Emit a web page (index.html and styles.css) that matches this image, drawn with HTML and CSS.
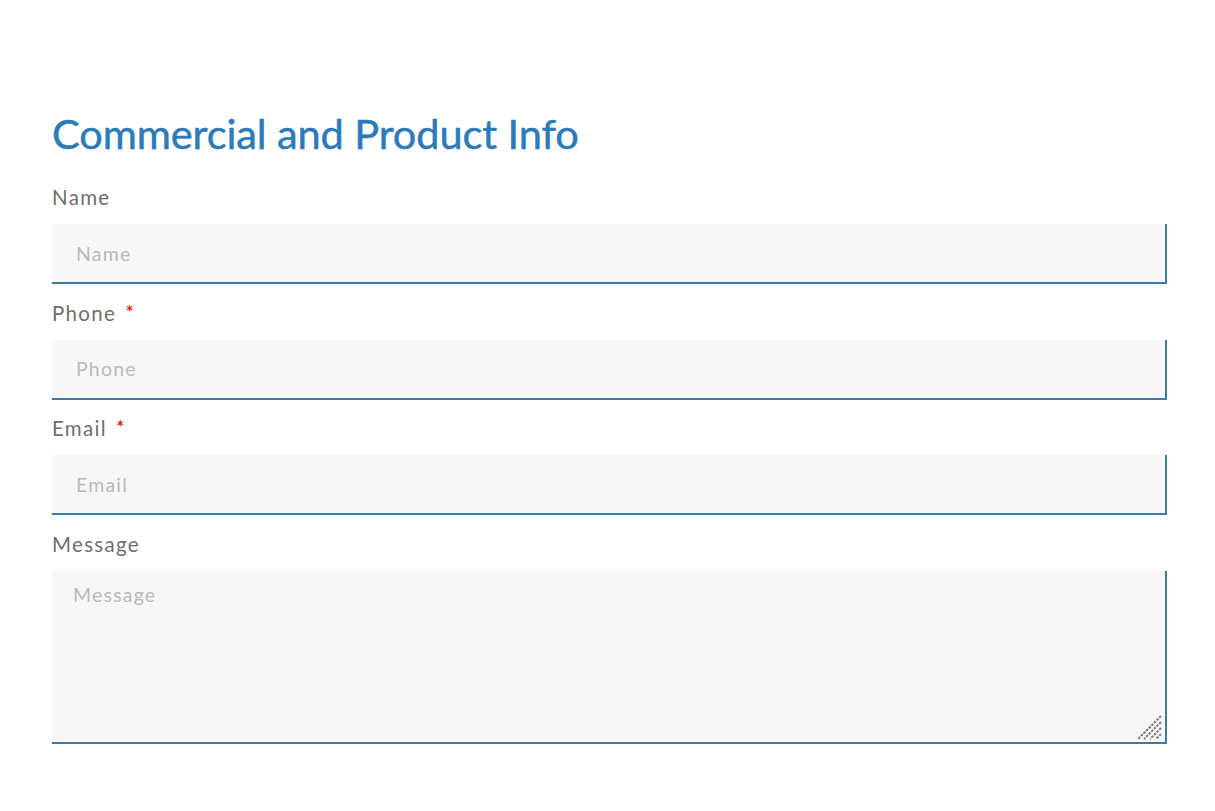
FILE: index.html
```html
<!DOCTYPE html>
<html lang="en">
<head>
<meta charset="utf-8">
<title>Commercial and Product Info</title>
<link rel="stylesheet" href="styles.css">
</head>
<body>
<main class="page">
  <form class="form">
    <h2 class="title">Commercial and Product Info</h2>
    <div class="field">
      <label class="label" for="name">Name</label>
      <input class="input" id="name" type="text" placeholder="Name">
    </div>
    <div class="field">
      <label class="label" for="phone">Phone <span class="req">*</span></label>
      <input class="input" id="phone" type="text" placeholder="Phone">
    </div>
    <div class="field">
      <label class="label" for="email">Email <span class="req">*</span></label>
      <input class="input" id="email" type="text" placeholder="Email">
    </div>
    <div class="field">
      <label class="label" for="message">Message</label>
      <div class="textarea-wrap">
        <textarea class="input textarea" id="message" placeholder="Message"></textarea>
        <svg class="grip" width="26" height="26" viewBox="0 0 26 26" aria-hidden="true">
          <g stroke="#7a7a7a" stroke-width="2" stroke-dasharray="2.5 1.2">
            <line x1="24" y1="1" x2="1" y2="24"/>
            <line x1="24" y1="7" x2="7" y2="24"/>
            <line x1="24" y1="13" x2="13" y2="24"/>
            <line x1="24" y1="19" x2="19" y2="24"/>
          </g>
        </svg>
      </div>
    </div>
  </form>
</main>
</body>
</html>
```

FILE: styles.css
```css
html, body {
  margin: 0;
  padding: 0;
  background: #ffffff;
}
.page {
  padding: 108px 48px 0 52px;
  font-family: "Lato", "Open Sans", sans-serif;
}
.form {
  width: 1115px;
  display: flex;
  flex-direction: column;
}
.title {
  margin: 0 0 25px 0;
  font-size: 41.5px;
  line-height: 50px;
  font-weight: 400;
  color: #2b7bbb;
  letter-spacing: -0.1px;
  -webkit-text-stroke: 0.5px #2b7bbb;
}
.field {
  display: flex;
  flex-direction: column;
}
.label {
  display: block;
  height: 24px;
  padding-top: 2px;
  font-size: 20.5px;
  line-height: 24px;
  color: #6e6e6e;
  letter-spacing: 1.3px;
  margin: 0 0 15px 0;
}
.req {
  color: #e2231a;
  font-size: 18px;
  font-weight: 700;
  line-height: 0;
  margin-left: 3px;
  vertical-align: 2px;
}
.input {
  box-sizing: border-box;
  width: 1115px;
  height: 60px;
  margin: 0 0 14.5px 0;
  padding: 0 24px;
  border: none;
  border-right: 2px solid #3b7bab;
  border-bottom: 2px solid #3b7bab;
  border-radius: 0;
  background: #f7f7f7;
  font-family: "Lato", "Open Sans", sans-serif;
  font-size: 19.5px;
  letter-spacing: 1.2px;
  color: #555;
  outline: none;
}
.input::placeholder {
  color: #b9b9b9;
}
.textarea-wrap {
  position: relative;
  width: 1115px;
}
.textarea {
  display: block;
  height: 173px;
  padding: 12px 21px;
  resize: none;
  margin-bottom: 0;
}
.grip {
  position: absolute;
  right: 4px;
  bottom: 3px;
  pointer-events: none;
}
```
